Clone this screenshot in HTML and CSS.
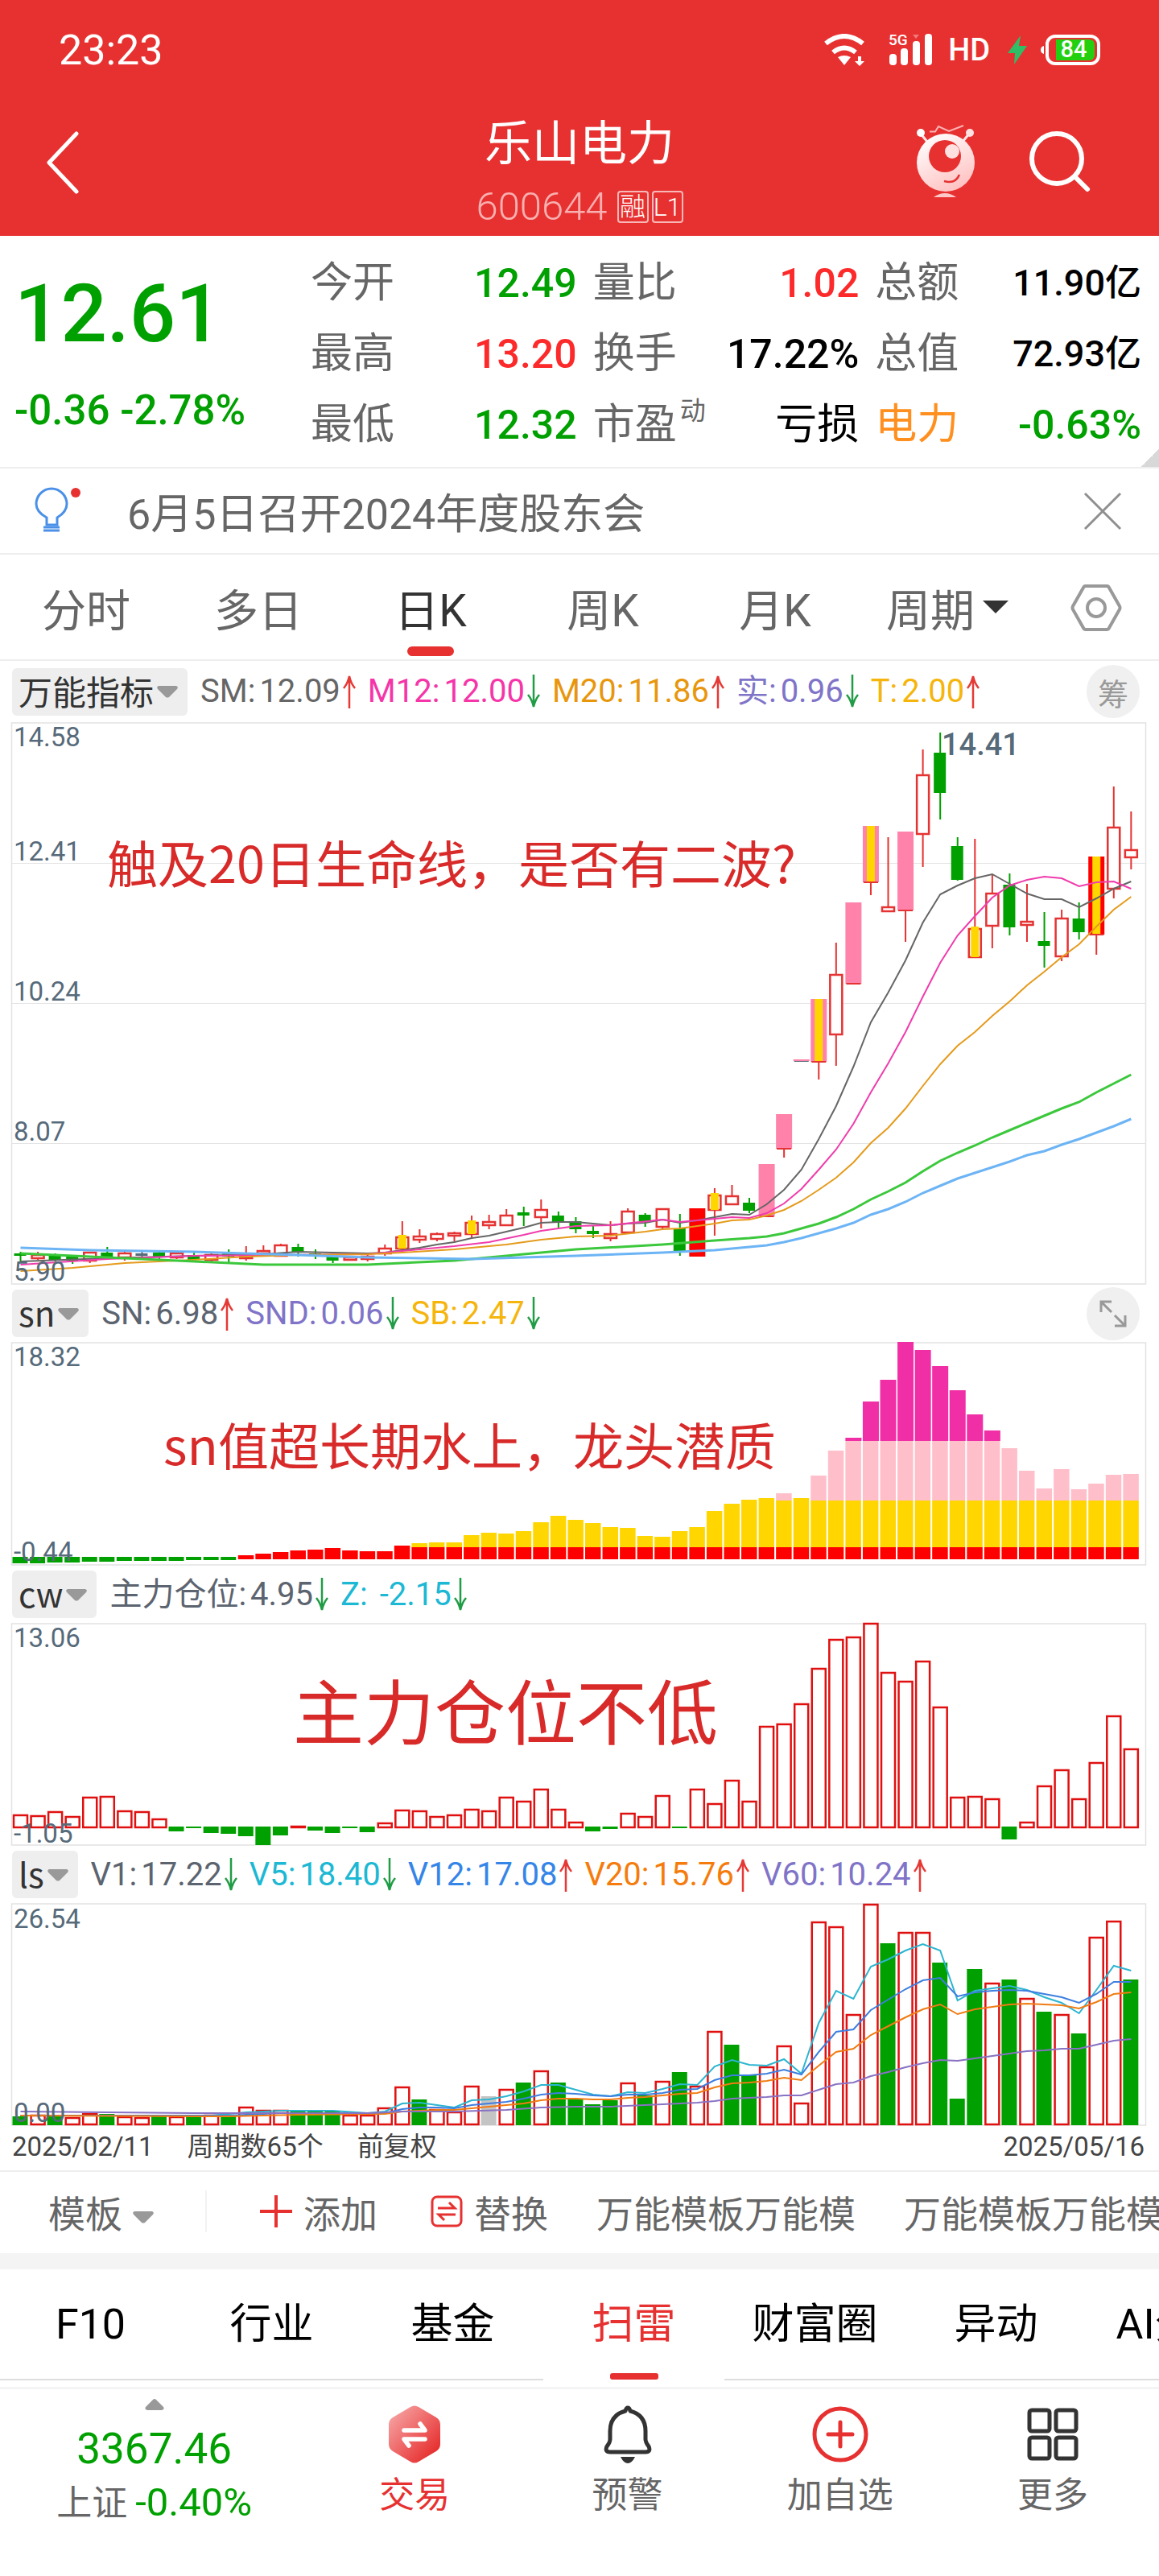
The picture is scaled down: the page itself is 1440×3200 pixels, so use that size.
FILE: index.html
```html
<!DOCTYPE html>
<html lang="zh-CN">
<head>
<meta charset="utf-8">
<meta name="viewport" content="width=device-width, initial-scale=1">
<title>乐山电力 600644</title>
<link rel="stylesheet" href="styles.css">
</head>
<body>
<svg class="defs" aria-hidden="true">
  <symbol id="up" viewBox="0 0 18 44"><path d="M9 43V3M2 18Q7 12 9 3Q11 12 16 18" fill="none" stroke="#e53935" stroke-width="2.500"/></symbol>
  <symbol id="down" viewBox="0 0 18 44"><path d="M9 1V41M2 26Q7 32 9 41Q11 32 16 26" fill="none" stroke="#219c46" stroke-width="2.500"/></symbol>
  <symbol id="caret" viewBox="0 0 28 16"><path d="M3 1H25Q28 2 26 5L16 15Q14 16 12 15L2 5Q0 2 3 1Z" fill="#999"/></symbol>
</svg>

<header class="top">
  <div class="status">
    <span class="time">23:23</span>
    <div class="status-icons">
      <svg class="i-wifi" width="52" height="40" viewBox="0 0 52 40" fill="none" stroke="#fff" stroke-width="6"><path d="M2 12Q25-6 48 12M11 23Q25 12 39 23"/><path d="M17 29Q25 25 33 29L25 39Z" fill="#fff" stroke="none"/><path d="M42 28h4v6h4l-6 6-6-6h4z" fill="#fff" stroke="none"/></svg>
      <svg class="i-signal" width="53" height="40" viewBox="0 0 53 40"><text x="-1" y="14" class="g5">5G</text><g fill="#fff"><rect x="0" y="25" width="9" height="14" rx="4"/><rect x="14" y="18" width="9" height="21" rx="4"/><rect x="29" y="9" width="9" height="30" rx="4"/><rect x="44" y="0" width="9" height="39" rx="4"/></g><path d="M29 1h8l-4 5z" fill="#f27a7a"/></svg>
      <span class="hd">HD</span>
      <svg class="i-bolt" width="24" height="36" viewBox="0 0 24 36"><path d="M16 0L0 22H9L8 36L24 13H14Z" fill="#2fbe66"/></svg>
      <svg width="74" height="38" viewBox="0 0 74 38"><path d="M4 14Q0 15 0 19T4 24Z" fill="#fff"/><rect x="8" y="2" width="64" height="34" rx="10" fill="none" stroke="#fff" stroke-width="4"/><path d="M19 6H60Q67 6 67 13V25Q67 32 60 32H19Z" fill="#22d010"/><text x="41" y="28" text-anchor="middle" class="batt">84</text></svg>
    </div>
  </div>
  <div class="titlebar">
    <button class="icon-btn back" aria-label="返回"><svg width="42" height="78" viewBox="0 0 42 78"><path d="M38 3L4 39L38 75" fill="none" stroke="#fff" stroke-width="5" stroke-linecap="round" stroke-linejoin="round"/></svg></button>
    <div class="name">
      <h1>乐山电力</h1>
      <div class="code"><span>600644</span><i>融</i><i>L1</i></div>
    </div>
    <button class="icon-btn robot" aria-label="智能助手"><svg width="76" height="92" viewBox="0 0 76 92"><defs><linearGradient id="rb" x1="0.2" y1="0" x2="0.7" y2="1"><stop offset="0" stop-color="#fff"/><stop offset="1" stop-color="#ffc0c0"/></linearGradient></defs><path d="M6 10L15 21M68 10L59 21" stroke="#ffe8e8" stroke-width="3"/><circle cx="7" cy="10" r="5" fill="#fff"/><circle cx="68" cy="10" r="5" fill="#ffe3e3"/><path d="M18 8.500H25L29 2L42 8L60 1" stroke="#ffb3b3" stroke-width="2" fill="none"/><circle cx="38" cy="47" r="36" fill="url(#rb)"/><circle cx="37" cy="39" r="20" fill="#e73131"/><circle cx="46" cy="33" r="9" fill="#ffe0e0"/><path d="M36 70Q50 74 55 62" fill="none" stroke="#e73131" stroke-width="2.500"/><path d="M23 90Q37 80 51 90Z" fill="#ffc8c8"/></svg></button>
    <button class="icon-btn search" aria-label="搜索"><svg width="78" height="78" viewBox="0 0 78 78" fill="none" stroke="#fff"><circle cx="35" cy="35" r="31" stroke-width="6"/><path d="M58 58L73 73" stroke-width="6" stroke-linecap="round"/></svg></button>
  </div>
</header>

<main>
<section class="quote">
  <div class="price">
    <strong>12.61</strong>
    <span>-0.36 -2.78%</span>
  </div>
  <dl class="facts">
    <div><dt>今开</dt><dd class="fall">12.49</dd></div>
    <div><dt>量比</dt><dd class="rise">1.02</dd></div>
    <div><dt>总额</dt><dd class="amount">11.90亿</dd></div>
    <div><dt>最高</dt><dd class="rise">13.20</dd></div>
    <div><dt>换手</dt><dd>17.22%</dd></div>
    <div><dt>总值</dt><dd class="amount">72.93亿</dd></div>
    <div><dt>最低</dt><dd class="fall">12.32</dd></div>
    <div><dt>市盈<sup>动</sup></dt><dd class="word">亏损</dd></div>
    <div><dt class="sector">电力</dt><dd class="fall">-0.63%</dd></div>
  </dl>
</section>

<section class="notice">
  <svg width="60" height="60" viewBox="0 0 60 60" fill="none" stroke="#4a90e8" stroke-width="3"><path d="M15 47V38Q2 31 2 21A19 19 0 0 1 40 21Q40 31 28 38V47Z"/><path d="M11 50H31M11 54H31" /><circle cx="51" cy="7" r="6" fill="#e73131" stroke="none"/></svg>
  <a href="#notice">6月5日召开2024年度股东会</a>
  <button class="icon-btn" aria-label="关闭"><svg width="48" height="48" viewBox="0 0 48 48" stroke="#8f8f8f" stroke-width="3"><path d="M2 2L46 46M46 2L2 46"/></svg></button>
</section>

<nav class="periods">
  <button>分时</button>
  <button>多日</button>
  <button class="on">日K</button>
  <button>周K</button>
  <button>月K</button>
  <button class="more">周期<svg width="32" height="16" viewBox="0 0 32 16"><path d="M0 0H32L16 16Z" fill="#333"/></svg></button>
  <button class="gear" aria-label="设置"><svg width="64" height="60" viewBox="0 0 64 60" fill="none" stroke="#999" stroke-width="4"><path d="M18 3H46Q47 3 48 5L61 28Q62 30 61 32L48 55Q47 57 46 57H18Q17 57 16 55L3 32Q2 30 3 28L16 5Q17 3 18 3Z"/><circle cx="32" cy="30" r="11"/></svg></button>
</nav>

<section class="panel">
  <div class="head first">
    <button class="pick">万能指标<svg width="28" height="16"><use href="#caret"/></svg></button>
    <div class="vals">
      <span class="c-gray">SM:<b>12.09</b><svg><use href="#up"/></svg></span>
      <span class="c-pink">M12:<b>12.00</b><svg><use href="#down"/></svg></span>
      <span class="c-amber">M20:<b>11.86</b><svg><use href="#up"/></svg></span>
      <span class="c-violet">实:<b>0.96</b><svg><use href="#down"/></svg></span>
      <span class="c-gold">T:<b>2.00</b><svg><use href="#up"/></svg></span>
    </div>
    <button class="round">筹</button>
  </div>
  <svg class="chart" id="k" viewBox="0 897 1440 699"></svg>
</section>

<section class="panel">
  <div class="head">
    <button class="pick">sn<svg width="28" height="16"><use href="#caret"/></svg></button>
    <div class="vals">
      <span class="c-slate">SN:<b>6.98</b><svg><use href="#up"/></svg></span>
      <span class="c-violet">SND:<b>0.06</b><svg><use href="#down"/></svg></span>
      <span class="c-gold">SB:<b>2.47</b><svg><use href="#down"/></svg></span>
    </div>
    <button class="round" aria-label="展开"><svg width="34" height="34" viewBox="0 0 34 34" fill="none" stroke="#999" stroke-width="3"><path d="M2 15V2H15M3 3L15 15M32 19V32H19M31 31L19 19"/></svg></button>
  </div>
  <svg class="chart" id="sn" viewBox="0 1667 1440 278"></svg>
</section>

<section class="panel">
  <div class="head">
    <button class="pick">cw<svg width="28" height="16"><use href="#caret"/></svg></button>
    <div class="vals">
      <span class="c-slate">主力仓位:<b>4.95</b><svg><use href="#down"/></svg></span>
      <span class="c-cyan">Z: <b>-2.15</b><svg><use href="#down"/></svg></span>
    </div>
  </div>
  <svg class="chart" id="cw" viewBox="0 2016 1440 277"></svg>
</section>

<section class="panel">
  <div class="head">
    <button class="pick">ls<svg width="28" height="16"><use href="#caret"/></svg></button>
    <div class="vals">
      <span class="c-slate">V1:<b>17.22</b><svg><use href="#down"/></svg></span>
      <span class="c-cyan">V5:<b>18.40</b><svg><use href="#down"/></svg></span>
      <span class="c-blue">V12:<b>17.08</b><svg><use href="#up"/></svg></span>
      <span class="c-orange">V20:<b>15.76</b><svg><use href="#up"/></svg></span>
      <span class="c-violet">V60:<b>10.24</b><svg><use href="#up"/></svg></span>
    </div>
  </div>
  <svg class="chart" id="ls" viewBox="0 2364 1440 277"></svg>
  <div class="dates"><span>2025/02/11</span><span>周期数65个</span><span>前复权</span><span class="end">2025/05/16</span></div>
</section>

<section class="templates">
  <button class="tpl-pick">模板<svg width="28" height="16"><use href="#caret"/></svg></button>
  <button class="add"><svg width="40" height="40" viewBox="0 0 40 40" stroke="#e73131" stroke-width="4"><path d="M20 0V40M0 20H40"/></svg>添加</button>
  <button class="swap"><svg width="40" height="40" viewBox="0 0 40 40" fill="none" stroke="#e73131" stroke-width="3"><rect x="2" y="2" width="36" height="36" rx="6"/><path d="M9 16H30L23 9M31 24H10L17 31"/></svg>替换</button>
  <button class="tpl">万能模板万能模</button>
  <button class="tpl">万能模板万能模</button>
</section>

<nav class="tabs">
  <a href="#f10">F10</a><a href="#industry">行业</a><a href="#fund">基金</a><a href="#risk" class="on">扫雷</a><a href="#circle">财富圈</a><a href="#moves">异动</a><a href="#ai">AI分析</a>
</nav>
</main>

<footer class="dock">
  <button class="index">
    <svg width="24" height="14" viewBox="0 0 24 14"><path d="M3 14H21Q25 13 23 10L14 1Q12-1 10 1L1 10Q-1 13 3 14Z" fill="#999"/></svg>
    <span class="pts">3367.46</span>
    <span class="chg"><span>上证</span>-0.40%</span>
  </button>
  <button class="on"><svg width="72" height="72" viewBox="0 0 72 72"><defs><linearGradient id="hx" x1="0.1" y1="0.1" x2="0.9" y2="0.9"><stop offset="0" stop-color="#f6a0a0"/><stop offset="1" stop-color="#e62a2a"/></linearGradient></defs><path d="M31 2Q36-1 41 2L63 15Q68 18 68 24V48Q68 54 63 57L41 70Q36 73 31 70L9 57Q4 54 4 48V24Q4 18 9 15Z" fill="url(#hx)"/><path d="M23 31H49L43 23M49 42H23L29 50" stroke="#fff" stroke-width="5.500" stroke-linecap="round" stroke-linejoin="round" fill="none"/></svg>交易</button>
  <button><svg width="72" height="72" viewBox="0 0 72 72" fill="none" stroke="#333" stroke-width="5"><path d="M36 3Q38 3 39 7Q58 12 58 32V42Q58 46 62 51Q65 58 58 58H14Q7 58 10 51Q14 46 14 42V32Q14 12 33 7Q34 3 36 3Z" stroke-linejoin="round"/><path d="M27 64H45Q41 72 36 72T27 64Z" fill="#333" stroke="none"/></svg>预警</button>
  <button><svg width="72" height="72" viewBox="0 0 72 72" fill="none" stroke="#e73131" stroke-width="5" stroke-linecap="round"><circle cx="36" cy="36" r="32"/><path d="M36 21V51M21 36H51"/></svg>加自选</button>
  <button><svg width="72" height="72" viewBox="0 0 72 72" fill="none" stroke="#333" stroke-width="5"><rect x="7" y="6" width="25" height="26" rx="3"/><rect x="40" y="6" width="25" height="26" rx="3"/><rect x="7" y="40" width="25" height="26" rx="3"/><rect x="40" y="40" width="25" height="26" rx="3"/></svg>更多</button>
</footer>
<script src="charts.js"></script>
</body>
</html>
```
FILE: styles.css
```css
* { box-sizing: border-box; }
body {
  margin: 0;
  background: #fff;
  color: #000;
  font-family: Roboto, "Noto Sans CJK SC", sans-serif;
  overflow-x: hidden;
}
button {
  border: 0;
  padding: 0;
  background: none;
  color: inherit;
  font: inherit;
  white-space: nowrap;
}
a { color: inherit; text-decoration: none; }
h1, dl, dd { margin: 0; }
svg { display: block; flex: none; }
.defs { position: absolute; width: 0; height: 0; }
.icon-btn { display: block; }

/* header */
.top { background: #e73131; color: #fff; height: 293px; }
.status {
  display: flex;
  justify-content: space-between;
  align-items: center;
  height: 124px;
  padding: 0 73px;
}
.time { font-size: 52px; }
.status-icons { display: flex; align-items: center; }
.i-wifi { margin-right: 29px; }
.i-signal { margin-right: 20px; overflow: visible; }
.i-bolt { margin: 0 17px 0 22px; }
.g5 { font-size: 19px; font-weight: 500; fill: #fff; }
.batt { font-size: 29px; font-weight: 500; fill: #fff; }
.hd { font-size: 38px; font-weight: 500; line-height: 40px; }
.titlebar { display: grid; grid-template-columns: 303px 1fr 141px 162px; height: 169px; }
.back { align-self: start; padding: 39px 0 0 57px; }
.name { text-align: center; }
.name h1 { font-size: 59px; font-weight: 400; line-height: 72px; padding-top: 19px; }
.code { display: flex; justify-content: center; align-items: center; gap: 4px; font-size: 49px; font-weight: 300; color: #f9b0b0; line-height: 60px; margin-top: 12px; }
.code span { margin-right: 8px; }
.code i {
  width: 39px;
  height: 40px;
  border: 2px solid #f9b8b8;
  border-radius: 4px;
  font-style: normal;
  font-size: 32px;
  line-height: 36px;
  color: #fff;
}
.robot { align-self: start; padding-top: 31px; }
.search { align-self: start; padding-top: 38px; }

/* quote */
.quote {
  display: flex;
  border-bottom: 2px solid #eee;
  padding: 15px 22px 8px 0;
  background: linear-gradient(135deg, transparent 50%, #d8d8d8 50%) right bottom / 22px 22px no-repeat;
}
.price { width: 386px; padding-left: 18px; color: #00a000; }
.price strong { display: block; font-size: 101px; font-weight: 500; line-height: 100px; padding-top: 32px; height: 170px; }
.price span { font-size: 51px; font-weight: 500; line-height: 64px; }
.facts { flex: 1; display: grid; grid-template-columns: repeat(3, 1fr); column-gap: 20px; }
.facts div { display: flex; justify-content: space-between; height: 88px; line-height: 88px; white-space: nowrap; }
.facts dt { font-size: 52px; color: #666; }
.facts sup { position: relative; top: -6px; font-size: 32px; line-height: 32px; margin-left: 4px; }
.facts .sector { color: #ff8f1f; }
.facts dd { font-size: 50px; font-weight: 500; }
.facts dd.amount { font-size: 45px; }
.facts dd.word { font-size: 52px; font-weight: 400; }
.fall { color: #00a000; }
.rise { color: #fc2a2a; }

/* notice */
.notice {
  display: flex;
  align-items: center;
  height: 107px;
  padding: 0 46px 0 43px;
  border-bottom: 2px solid #eee;
  font-size: 52px;
  color: #666;
}
.notice a { flex: 1; padding-left: 55px; }

/* periods */
.periods { display: flex; height: 132px; border-bottom: 2px solid #eee; font-size: 55px; color: #666; }
.periods button { position: relative; flex: 214; display: flex; align-items: center; justify-content: center; }
.periods .gear { flex: 156; align-items: flex-start; padding-top: 36px; }
.periods .on { color: #333; }
.periods .on::after { content: ""; position: absolute; left: 50%; margin-left: -29px; bottom: 4px; width: 58px; height: 12px; border-radius: 6px; background: #e73131; }
.periods .more { gap: 10px; }

/* indicator panels */
.head { display: flex; align-items: center; height: 71px; padding: 0 24px 0 15px; }
.head.first { height: 76px; }
.pick { display: flex; align-items: center; gap: 3px; height: 59px; padding: 0 11px 4px 8px; border-radius: 6px; background: #eee; color: #333; font-family: "Noto Sans CJK SC", sans-serif; font-size: 42px; }
.pick svg { margin-top: 4px; }
.vals { flex: 1; display: flex; gap: 14px; padding-left: 16px; font-size: 40px; line-height: 56px; white-space: nowrap; }
.vals span { display: flex; align-items: center; white-space: pre; }
.vals b { font-weight: 400; margin-left: 5px; }
.vals svg { width: 18px; height: 44px; margin-left: 2px; }
.round { display: flex; align-items: center; justify-content: center; width: 66px; height: 66px; border-radius: 50%; background: #f0f0f0; color: #999; font-size: 38px; }
.c-gray { color: #666; }
.c-slate { color: #5c6470; }
.c-pink { color: #f535a8; }
.c-amber { color: #e8960c; }
.c-violet { color: #8074c8; }
.c-gold { color: #f5b50c; }
.c-cyan { color: #1cb8d4; }
.c-blue { color: #3585e8; }
.c-orange { color: #f57c0c; }
.chart { width: 100%; height: auto; overflow: visible; }
.axis { font-size: 33px; fill: #566a7a; }
.peak { font-size: 38px; fill: #566a7a; font-weight: 500; }
.memo { font-family: "Noto Sans CJK SC", sans-serif; font-size: 63px; fill: #d92a2a; }
.memo.big { font-size: 88px; }
.dates { display: flex; height: 57px; padding: 0 18px 0 15px; border-bottom: 2px solid #eee; font-size: 33px; line-height: 52px; color: #444; }
.dates span { margin-right: 42px; }
.dates .end { margin: 0 0 0 auto; }

/* templates */
.templates { display: flex; align-items: center; height: 121px; padding-bottom: 4px; border-bottom: 20px solid #f4f4f4; overflow: hidden; font-size: 46px; color: #666; }
.templates button { display: flex; align-items: center; flex: none; }
.tpl-pick { gap: 12px; width: 257px; height: 52px; padding-left: 60px; border-right: 2px solid #f2f2f2; }
.tpl-pick svg { margin-top: 14px; }
.add { gap: 14px; padding-left: 66px; }
.swap { gap: 14px; padding-left: 66px; }
.tpl { padding-left: 60px; }

/* tabs */
.tabs { display: flex; height: 138px; overflow: hidden; font-size: 52px; }
.tabs a { position: relative; flex: 0 0 225px; text-align: center; line-height: 138px; border-bottom: 2px solid #ddd; white-space: nowrap; }
.tabs .on { color: #e73131; border-color: #fff; }
.tabs .on::after { content: ""; position: absolute; left: 50%; margin-left: -30px; bottom: -1px; width: 60px; height: 8px; border-radius: 3px; background: #e73131; }

/* dock */
.dock { display: flex; margin-top: 8px; border-top: 3px solid #f4f4f4; padding-bottom: 72px; }
.dock button { flex: 264; display: flex; flex-direction: column; align-items: center; padding-top: 20px; font-size: 44px; line-height: 60px; color: #666; }
.dock button > svg { margin-bottom: 10px; }
.dock .on { color: #e73131; }
.dock .index { flex: 383; padding-top: 12px; color: #00a000; }
.dock .index > svg { margin-bottom: 12px; }
.pts { font-size: 53px; line-height: 72px; }
.chg { font-size: 49px; line-height: 62px; }
.chg span { color: #666; font-size: 44px; margin-right: 10px; }
```
FILE: charts.js
```js
(function () {
  var STEP = 21.56, FIRST = 25.5;
  function cx(i) { return FIRST + STEP * i; }
  function box(x, y, w, h, fill) {
    return '<rect x="' + x + '" y="' + y + '" width="' + w + '" height="' + h + '" fill="' + fill + '"/>';
  }
  function hollow(i, top, bottom, w, color) {
    return '<rect x="' + (cx(i) - w / 2 + 1) + '" y="' + (top + 1) + '" width="' + (w - 2) + '" height="' + Math.max(bottom - top - 2, 1) + '" fill="#fff" stroke="' + color + '" stroke-width="2.5"/>';
  }
  function frame(top, bottom) {
    return '<rect x="14.5" y="' + top + '" width="1409" height="' + (bottom - top) + '" fill="none" stroke="#e2e2e2" stroke-width="1.5"/>';
  }
  function label(x, y, text, cls) {
    return '<text x="' + x + '" y="' + y + '" class="' + (cls || 'axis') + '">' + text + '</text>';
  }
  // pairs: index, y, index, y ...
  function line(pairs, color, w) {
    var pts = [];
    for (var n = 0; n < pairs.length; n += 2) pts.push(cx(pairs[n]) + ',' + pairs[n + 1]);
    return '<polyline points="' + pts.join(' ') + '" fill="none" stroke="' + color + '" stroke-width="' + w + '"/>';
  }
  function run(start, ys) {
    var out = [];
    ys.forEach(function (y, n) { out.push(start + n, y); });
    return out;
  }
  function draw(id, html) { document.getElementById(id).innerHTML = html; }

  var GREEN = '#00a000', RED = '#e53232', BAR = '#e01010';

  // candles: kind, high, body top, body bottom, low
  var candles = [
    ['g',1555,1557,1560,1568],['r',1555,1558,1564,1565],['g',1557,1560,1566,1567],['g',1560,1561,1566,1570],['r',1555,1555,1567,1569],
    ['g',1549,1556,1562,1565],['r',1555,1556,1563,1566],['c',1555,1557,1560,1562],['g',1555,1556,1562,1565],['r',1555,1556,1563,1564],
    ['g',1556,1559,1565,1567],['r',1557,1558,1566,1568],['g',1552,1557,1561,1569],['r',1548,1559,1564,1566],['r',1547,1553,1558,1558],
    ['r',1545,1546,1561,1561],['g',1545,1549,1556,1561],['g',1552,1557,1560,1564],['g',1559,1560,1566,1569],['r',1560,1561,1566,1566],
    ['r',1558,1560,1565,1567],['r',1546,1550,1558,1560],['y',1517,1536,1552,1552],['r',1527,1535,1541,1544],['r',1531,1532,1540,1542],
    ['r',1530,1531,1536,1542],['y',1510,1518,1534,1538],['r',1509,1517,1523,1527],['r',1502,1509,1523,1523],['g',1499,1506,1510,1523],
    ['r',1490,1502,1513,1526],['g',1505,1510,1518,1525],['g',1512,1517,1527,1532],['g',1523,1529,1533,1538],['r',1517,1532,1539,1542],
    ['r',1501,1504,1532,1532],['g',1507,1509,1517,1524],['r',1501,1501,1525,1527],['g',1508,1526,1555,1560],['R',1501,1501,1561,1561],
    ['y',1476,1484,1504,1535],['r',1472,1485,1497,1497],['g',1488,1494,1504,1507],['p',1446,1446,1511,1511],['p',1384,1384,1427,1438],
    ['t',1316,1316,1319,1319],['py',1241,1241,1319,1341],['r',1171,1210,1286,1324],['p',1121,1121,1222,1222],['py',1026,1026,1096,1112],
    ['r',1040,1126,1133,1133],['p',1033,1033,1131,1170],['r',931,962,1037,1077],['g',910,935,985,1018],['g',1040,1051,1093,1094],
    ['y',1042,1153,1190,1190],['r',1086,1109,1151,1178],['g',1085,1099,1152,1162],['r',1098,1144,1150,1170],['g',1133,1169,1175,1202],
    ['r',1130,1140,1189,1194],['g',1121,1141,1158,1167],['ry',1064,1064,1161,1186],['r',977,1027,1105,1116],['r',1008,1055,1066,1080]
  ];
  var k = frame(898, 1595);
  [1072, 1246, 1420].forEach(function (y) { k += box(15, y, 1409, 1, '#e4e4e4'); });
  candles.forEach(function (c, i) {
    var kind = c[0], x = cx(i), top = c[2], h = c[3] - top;
    var wick = kind === 'g' ? GREEN : kind === 'c' ? '#566a7a' : RED;
    k += box(x - 1, c[1], 2, c[4] - c[1], wick);
    if (kind === 'g' || kind === 'c') k += box(x - 8, top, 15, h, wick);
    else if (kind === 'r') k += hollow(i, top, c[3], 17, RED);
    else if (kind === 'R') k += box(x - 10, top, 20, h, '#f00');
    else if (kind === 'y') k += hollow(i, top, c[3], 17, RED) + box(x - 5, top - 2, 10, h + 1, '#ffd600');
    else if (kind === 't') k += box(x - 10, top, 20, 2, '#ff82ab') + box(x - 9, top + 2, 18, 1, '#566a7a');
    else {
      k += box(x - 10, top, 20, h, kind === 'ry' ? '#f00' : '#ff82ab') + box(x - 9, c[3] - 1, 18, 2, RED);
      if (kind !== 'p') k += box(x - 5, top, 10, h - 1, '#ffd600');
    }
  });
  k += line([0,1567,5,1563,10,1560,14,1558,16,1555,18,1556,20,1557,21,1556].concat(run(22, [1553,1550,1546,1543,1538,1535,1530,1525,1519,1518,1518,1520,1522,1520,1519,1515,1519,1516,1512,1508,1509,1496,1478,1453,1415,1374,1325,1270,1233,1193,1146,1111,1100,1091,1086,1098,1110,1117,1117,1127,1116,1104,1095])), '#666', 2);
  k += line([0,1571,5,1564,10,1560,15,1559,20,1558,22,1554,25,1548,27,1543,29,1534,30,1529,32,1523,34,1522,37,1515,38,1518,39,1516,41,1512,42,1513].concat(run(43, [1507,1495,1477,1453,1428,1396,1357,1321,1282,1238,1196,1162,1138,1115,1100,1093,1089,1091,1101,1096,1095,1104])), '#f03cac', 2);
  k += line([0,1579,3,1575,6,1569,10,1565,13,1561,16,1559,20,1558,22,1556,25,1552,28,1546,30,1540,32,1536,34,1535,36,1530].concat(run(37, [1527,1526,1523,1520,1516,1515,1510,1503,1492,1478,1463,1444,1420,1401,1377,1349,1322,1299,1282,1262,1244,1224,1207,1189,1173,1151,1130,1114])), '#e59b1c', 2);
  k += line([0,1557,5,1562,10,1567,14,1571,20,1571,25,1566,28,1560,32,1552,37,1546,40,1541,42,1538].concat(run(43, [1536,1532,1526,1520,1512,1502,1490,1480,1469,1455,1442,1432,1423,1413,1404,1395,1386,1377,1369,1357,1346,1335])), '#3cc83c', 3);
  k += line([0,1550,4,1553,10,1555,16,1559,20,1562,26,1564,32,1560,37,1556,40,1553].concat(run(43, [1547,1543,1538,1532,1526,1519,1509,1502,1493,1482,1473,1464,1457,1450,1443,1435,1430,1422,1415,1407,1399,1390])), '#6cb4f5', 3);
  k += label(17, 927, '14.58') + label(17, 1069, '12.41') + label(17, 1243, '10.24') + label(17, 1417, '8.07') + label(17, 1591, '5.90');
  k += label(1170, 938, '14.41', 'peak') + label(133, 1097, '触及20日生命线，是否有二波?', 'memo');
  draw('k', k);

  // stacked bars: top of each column, coloured by level
  var sn = [1932,1930,1928,1926,1925,1923,1926,1927,1927,1920,1917,1916,1916,1907,1904,1905,1902,1891,1883,1888,1892,1897,1898,1908,1909,1902,1897,1877,1868,1863,1861,1855,1861,1833,1802,1786,1741,1714,1667,1677,1697,1727,1757,1777,1799,1827,1849,1825,1850,1843,1832,1831];
  var below = [8,8,7,7,6,6,5,5,5,5,4,4,4];
  var s = frame(1668, 1944);
  below.forEach(function (h, i) { s += box(cx(i) - 10, 1934, 19, h, GREEN); });
  sn.forEach(function (top, n) {
    var x = cx(n + below.length) - 10;
    if (top < 1790) s += box(x, top, 20, 1790 - top, '#f02fa6');
    if (top < 1858) s += box(x, Math.max(top, 1790), 19.5, 1864 - Math.max(top, 1790), '#ffbfca');
    if (top < 1918) { var y = top < 1858 ? 1864 : top; s += box(x, y, 19.5, 1922 - y, '#ffd600'); }
    var r = top < 1918 ? 1922 : top;
    s += box(x, r, 19.5, 1937 - r, '#f00');
  });
  s += label(17, 1697, '18.32') + label(17, 1939, '-0.44') + label(203, 1820, 'sn值超长期水上，龙头潜质', 'memo');
  draw('sn', s);

  // positive numbers are column tops, negative numbers are depths below zero
  var cw = [2254,2255,2250,2256,2232,2231,2249,2250,2259,-6,-2,-8,-9,-12,-23,-11,2268,-5,-8,-2,-7,2264,2248,2249,2256,2254,2247,2249,2232,2237,2222,2247,2263,-6,-3,2252,2256,2230,-2,2222,2240,2211,2237,2144,2141,2116,2072,2036,2033,2016,2077,2088,2063,2120,2232,2231,2234,-16,2263,2218,2198,2234,2189,2131,2172];
  var c = frame(2017, 2292);
  cw.forEach(function (v, i) {
    c += v < 0 ? box(cx(i) - 10, 2269, 19, -v, GREEN) : hollow(i, v, 2271, 19, BAR);
  });
  c += label(17, 2046, '13.06') + label(17, 2289, '-1.05') + label(364, 2160, '主力仓位不低', 'memo big');
  draw('cw', c);

  var kinds = 'grgrrgrrgrgrgrrrgggrrrrgrrrxrgrgggg' + 'rgrgrrggrrrrrrrgrrgggrgrgrgrrg';
  var ls = [2629,2627,2629,2630,2625,2626,2629,2630,2629,2629,2629,2627,2627,2617,2621,2621,2622,2621,2622,2627,2627,2618,2592,2608,2620,2623,2591,2604,2595,2587,2572,2587,2607,2614,2609,2587,2603,2585,2574,2591,2523,2540,2577,2567,2541,2612,2387,2393,2502,2365,2414,2400,2400,2438,2607,2446,2463,2459,2482,2499,2502,2526,2406,2386,2459];
  var v = frame(2365, 2640);
  ls.forEach(function (top, i) {
    var kind = kinds[i];
    v += kind === 'r' ? hollow(i, top, 2640, 19, BAR) : box(cx(i) - 10, top, 19, 2640 - top, kind === 'g' ? GREEN : '#c4c4c4');
  });
  v += line([0,2628,11,2628,13,2624,15,2622,18,2622,20,2625].concat(run(21, [2623,2613,2612,2615,2618,2609,2608,2604,2598,2590,2590,2596,2602,2604,2599,2600,2595,2589,2590,2567,2559,2565,2566,2558,2576,2513,2473,2483,2443,2434,2423,2415,2423,2485,2473,2470,2467,2472,2481,2488,2501,2472,2442,2448])), '#2cb5d0', 2);
  v += line([0,2628,12,2628,15,2625,21,2625].concat(run(22, [2620,2618,2618,2619,2615,2613,2611,2607,2602,2600,2601,2603,2604,2602,2602,2600,2596,2595,2584,2578,2578,2576,2571,2577,2549,2524,2521,2497,2484,2471,2460,2457,2480,2475,2473,2472,2473,2477,2481,2488,2477,2462,2462])), '#3d7fe0', 2);
  v += line([0,2628,12,2629,16,2627,21,2626].concat(run(22, [2623,2622,2621,2621,2619,2617,2615,2613,2609,2607,2607,2608,2608,2606,2605,2603,2601,2600,2593,2588,2587,2585,2581,2584,2566,2549,2545,2528,2517,2506,2496,2490,2502,2496,2493,2490,2489,2490,2491,2495,2487,2477,2475])), '#f07c14', 2);
  v += line([0,2623,10,2625,20,2625,22,2623,25,2623,28,2621,30,2618,32,2617,34,2617,37,2614,39,2612,40,2610,41,2607,43,2605].concat(run(44, [2603,2603,2596,2589,2587,2579,2574,2568,2563,2559,2560,2557,2554,2551,2548,2547,2545,2545,2540,2535,2533])), '#8872c4', 2);
  v += label(17, 2395, '26.54') + label(17, 2636, '0.00');
  draw('ls', v);
})();
```
